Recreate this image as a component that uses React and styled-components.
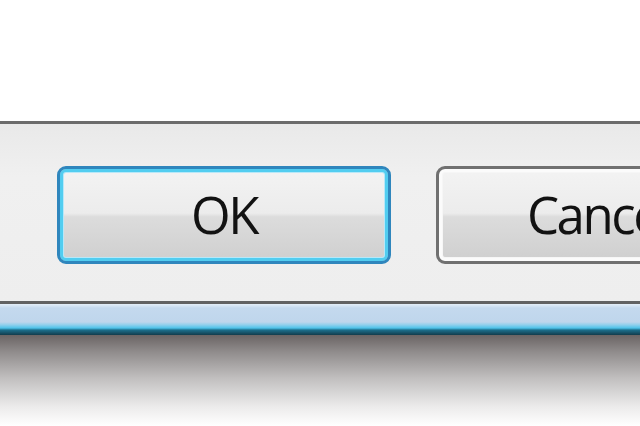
import React from "react";
import styled, { createGlobalStyle } from "styled-components";

const GlobalStyle = createGlobalStyle`
  html, body {
    margin: 0;
    padding: 0;
    background: #ffffff;
    overflow: hidden;
  }
`;

const App = () => {
  return (
    <>
      <GlobalStyle />
      <Screen>
        <Content />
        <Footer>
          <Button $primary>OK</Button>
          <Button>Cancel</Button>
        </Footer>
        <Frame />
        <Shadow />
      </Screen>
    </>
  );
};
export default App;

const Screen = styled.div`
  width: 640px;
  height: 426px;
  display: flex;
  flex-direction: column;
  overflow: hidden;
  font-family: "Open Sans", "DejaVu Sans", sans-serif;
`;

const Content = styled.div`
  height: 121px;
  background: #ffffff;
  border-bottom: 3px solid #6c6c6c;
`;

const Footer = styled.div`
  height: 180px;
  box-sizing: border-box;
  background: linear-gradient(#e9e9e9, #f0f0f0 30%, #eeeeee);
  display: flex;
  align-items: center;
  gap: 45px;
  padding-left: 57px;
  border-bottom: 3px solid #626262;
`;

const Button = styled.div`
  flex: 0 0 auto;
  width: ${(p) => (p.$primary ? "334px" : "400px")};
  height: 98px;
  box-sizing: border-box;
  margin-top: 5px;
  border-radius: 9px;
  border: 3px solid ${(p) => (p.$primary ? "#2f86bd" : "#707070")};
  box-shadow: inset 0 0 0 3px ${(p) => (p.$primary ? "#52cdf0" : "#fbfbfb")},
    inset 0 0 0 4px ${(p) => (p.$primary ? "#b8e8f8" : "#f6f6f6")};
  background: linear-gradient(#f3f3f3, #ececec 48%, #dcdcdc 52%, #cfcfcf);
  display: flex;
  align-items: center;
  justify-content: ${(p) => (p.$primary ? "center" : "flex-start")};
  padding-left: ${(p) => (p.$primary ? "0" : "88px")};
  padding-bottom: 2px;
  font-size: 51px;
  font-weight: 500;
  letter-spacing: -2.5px;
  color: #121212;
`;

const Frame = styled.div`
  height: 31px;
  flex: 0 0 auto;
  background: linear-gradient(
    #e4eef8 0px,
    #c4d9ee 4px,
    #bfd6ec 18px,
    #8ecfec 21px,
    #4fc3ea 24px,
    #1c6f8c 26px,
    #123c4c 31px
  );
`;

const Shadow = styled.div`
  flex: 1;
  background: linear-gradient(#6a6464, #8f8b8b 18%, #c2c0c0 48%, #ebeaea 78%, #ffffff);
`;
